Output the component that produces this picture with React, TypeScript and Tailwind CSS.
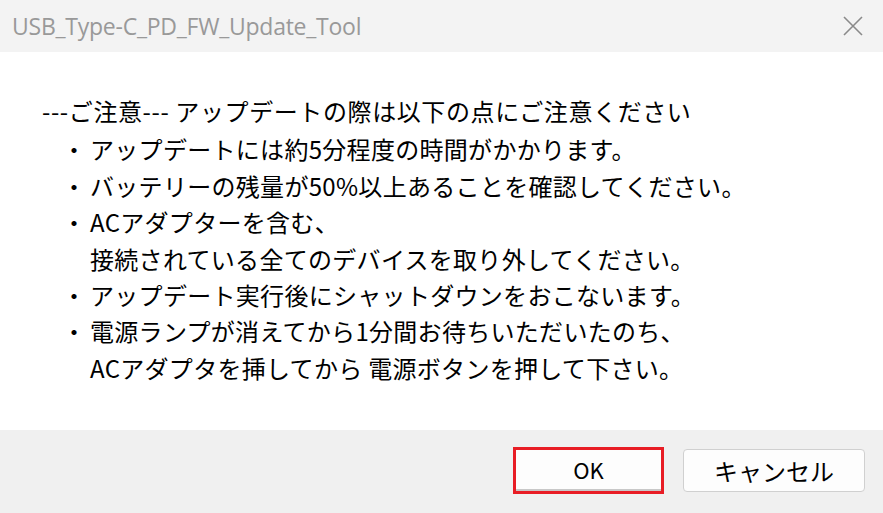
import React from 'react';

const font = { fontFamily: '"Noto Sans CJK JP", "Noto Sans", sans-serif' };

const lines: { text: string; indent: 'bullet' | 'cont' }[] = [
  { text: 'アップデートには約5分程度の時間がかかります。', indent: 'bullet' },
  { text: 'バッテリーの残量が50%以上あることを確認してください。', indent: 'bullet' },
  { text: 'ACアダプターを含む、', indent: 'bullet' },
  { text: '接続されている全てのデバイスを取り外してください。', indent: 'cont' },
  { text: 'アップデート実行後にシャットダウンをおこないます。', indent: 'bullet' },
  { text: '電源ランプが消えてから1分間お待ちいただいたのち、', indent: 'bullet' },
  { text: 'ACアダプタを挿してから 電源ボタンを押して下さい。', indent: 'cont' },
];

function App() {
  return (
    <div className="w-[883px] h-[513px] flex flex-col bg-white overflow-hidden" style={font}>
      <div className="h-[52px] shrink-0 bg-[#f3f3f3] flex items-center justify-between pl-[12px] pr-[20px]">
        <span className="text-[23px] text-[#999999] font-['Open_Sans','Noto_Sans',sans-serif] tracking-[-0.25px]">
          USB_Type-C_PD_FW_Update_Tool
        </span>
        <svg width="20" height="20" viewBox="0 0 20 20" className="text-[#8a8a8a]">
          <path d="M1 1 L19 19 M19 1 L1 19" stroke="currentColor" strokeWidth="1.6" />
        </svg>
      </div>

      <div className="flex-1 pl-[42px] pt-[41px] text-[24px] leading-[36.4px] text-black">
        <div className="mb-[2px] tracking-[0.6px]">---ご注意--- アップデートの際は以下の点にご注意ください</div>
        {lines.map((l, i) => (
          <div key={i} className="flex">
            <span className="w-[48px] shrink-0 text-right pr-[4px]">{l.indent === 'bullet' ? '・' : ''}</span>
            <span className="tracking-[0.3px]">{l.text}</span>
          </div>
        ))}
      </div>

      <div className="h-[83px] shrink-0 bg-[#f0f0f0] flex items-center justify-end gap-[19px] pr-[18px] pb-[2px]">
        <div className="border-[3px] border-[#e81d25] p-0">
          <button className="w-[145px] h-[41px] bg-[#fdfdfd] border-b-2 border-[#c8c8c8] text-[22px] text-black">
            OK
          </button>
        </div>
        <button className="w-[182px] h-[43px] bg-[#fdfdfd] border border-[#d0d0d0] rounded-[4px] text-[24px] text-black">
          キャンセル
        </button>
      </div>
    </div>
  );
}

export default App;
